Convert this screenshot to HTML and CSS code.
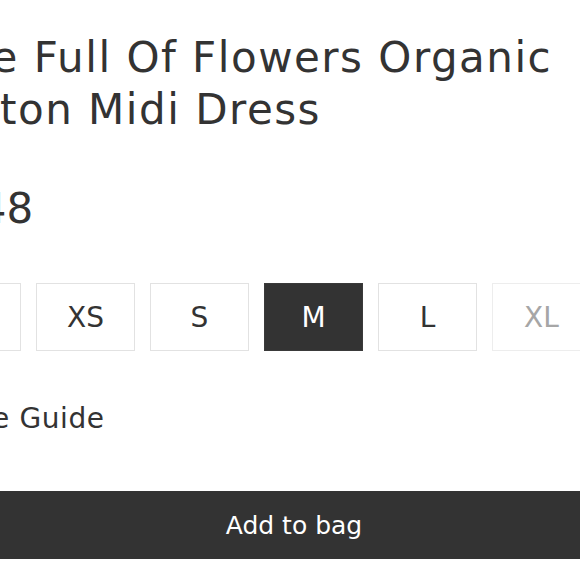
FILE: index.html
```html
<!DOCTYPE html>
<html>
<head>
<meta charset="utf-8">
<link rel="stylesheet" href="styles.css">
</head>
<body>
<div class="page">
  <h1 class="title">Evie Full Of Flowers Organic Cotton Midi Dress</h1>
  <div class="price">£48</div>
  <div class="sizes">
    <button class="size">XXS</button>
    <button class="size">XS</button>
    <button class="size">S</button>
    <button class="size selected">M</button>
    <button class="size">L</button>
    <button class="size disabled">XL</button>
  </div>
  <a class="guide">Size Guide</a>
  <button class="add">Add to bag</button>
</div>
</body>
</html>
```
FILE: styles.css
```css
html, body {
  margin: 0;
  padding: 0;
  background: #fff;
  overflow: hidden;
}
.page {
  width: 744px;
  margin-left: -50px;
  font-family: "DejaVu Sans", sans-serif;
  color: #333;
  display: flex;
  flex-direction: column;
  align-items: flex-start;
}
.title {
  margin: 32px 0 0 -26px;
  font-size: 42px;
  font-weight: normal;
  letter-spacing: 1.5px;
  line-height: 52px;
  width: 660px;
}
.price {
  margin-top: 48px;
  margin-left: 3px;
  font-size: 42px;
  line-height: 50px;
}
.sizes {
  display: flex;
  gap: 15px;
  margin-top: 49px;
  margin-left: -28px;
}
.size {
  width: 99px;
  height: 68px;
  box-sizing: border-box;
  border: 1px solid #e2e2e2;
  background: #fff;
  color: #333;
  font-family: inherit;
  font-size: 28px;
  padding: 0;
}
.size.selected {
  background: #333;
  color: #fff;
  border-color: #3a3a3a;
}
.size.disabled {
  color: #a6a6a6;
  border-color: #ededed;
}
.guide {
  margin-top: 51px;
  font-size: 28px;
  letter-spacing: 0.6px;
  line-height: 34px;
}
.add {
  margin-top: 55px;
  margin-left: -28px;
  width: 744px;
  height: 68px;
  background: #333;
  border: none;
  box-shadow: 0 1px 0 #c4c4c4;
  color: #fff;
  font-family: inherit;
  font-size: 25px;
  padding: 0;
}
```
